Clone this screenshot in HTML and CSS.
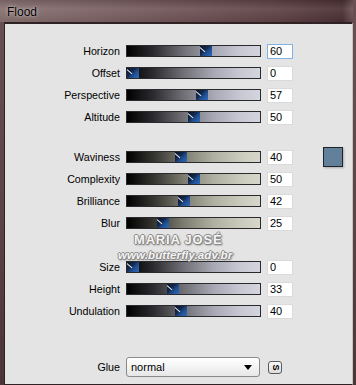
FILE: index.html
```html
<!DOCTYPE html>
<html>
<head>
<meta charset="utf-8">
<link rel="stylesheet" href="styles.css">
</head>
<body>
<div class="titlebar"><span class="title">Flood</span></div>
<div class="frame">
  <div class="panel">
    <div class="group g1">
      <div class="row"><span class="label">Horizon</span><div class="track t-lav"><div class="thumb" style="--p:0.60"></div></div><div class="val focus">60</div></div>
      <div class="row"><span class="label">Offset</span><div class="track t-lav"><div class="thumb" style="--p:0"></div></div><div class="val">0</div></div>
      <div class="row"><span class="label">Perspective</span><div class="track t-lav"><div class="thumb" style="--p:0.57"></div></div><div class="val">57</div></div>
      <div class="row"><span class="label">Altitude</span><div class="track t-lav"><div class="thumb" style="--p:0.50"></div></div><div class="val">50</div></div>
    </div>
    <div class="group g2">
      <div class="row"><span class="label">Waviness</span><div class="track t-beige"><div class="thumb" style="--p:0.40"></div></div><div class="val">40</div><div class="swatch"></div></div>
      <div class="row"><span class="label">Complexity</span><div class="track t-beige"><div class="thumb" style="--p:0.50"></div></div><div class="val">50</div></div>
      <div class="row"><span class="label">Brilliance</span><div class="track t-beige"><div class="thumb" style="--p:0.42"></div></div><div class="val">42</div></div>
      <div class="row"><span class="label">Blur</span><div class="track t-beige"><div class="thumb" style="--p:0.25"></div></div><div class="val">25</div></div>
    </div>
    <div class="group g3">
      <div class="row"><span class="label">Size</span><div class="track t-lav"><div class="thumb" style="--p:0"></div></div><div class="val">0</div></div>
      <div class="row"><span class="label">Height</span><div class="track t-lav"><div class="thumb" style="--p:0.33"></div></div><div class="val">33</div></div>
      <div class="row"><span class="label">Undulation</span><div class="track t-lav"><div class="thumb" style="--p:0.40"></div></div><div class="val">40</div></div>
    </div>
    <div class="row glue">
      <span class="label">Glue</span>
      <div class="select"><span>normal</span><span class="arrow"></span></div>
      <div class="sbtn"><span>S</span></div>
    </div>
    <div class="wm wm1">MARIA JOSÉ</div>
    <div class="wm wm2">www.butterfly.adv.br</div>
  </div>
</div>
</body>
</html>
```
FILE: styles.css
```css
html, body {
  margin: 0;
  padding: 0;
}
body {
  width: 356px;
  height: 385px;
  overflow: hidden;
  background: linear-gradient(180deg, #6a5052 0%, #5a4245 60%, #4a3537 100%);
  font-family: "Liberation Sans", Arial, sans-serif;
}
.titlebar {
  height: 22px;
  width: 353px;
  padding-left: 7px;
  box-sizing: border-box;
  background:
    linear-gradient(180deg, rgba(0,0,0,0.12) 0%, rgba(255,255,255,0.08) 40%, rgba(0,0,0,0.05) 100%),
    linear-gradient(90deg, #86706f 0%, #7c6264 25%, #6c5054 55%, #5c4044 80%, #4a2f33 97%, #6a5254 100%);
  display: flex;
  align-items: center;
}
.title {
  font-size: 12px;
  color: #000;
  text-shadow: 0 0 4px rgba(255,255,255,0.55), 0 0 2px rgba(255,255,255,0.4);
  margin-top: 1px;
}
.frame {
  height: 363px;
  padding-left: 4px;
  display: flex;
}
.panel {
  position: relative;
  width: 349px;
  box-sizing: border-box;
  border-top: 2px solid #2e2224;
  border-left: 1px solid #2e2224;
  border-bottom: 1px solid #2e2224;
  border-right: 1px solid #c4c4c4;
  background: #e4e4e4;
  padding-top: 16px;
}
.group { display: flex; flex-direction: column; }
.g2 { margin-top: 18px; }
.g3 { margin-top: 22px; }
.row {
  display: flex;
  align-items: center;
  height: 22px;
}
.label {
  width: 115px;
  text-align: right;
  font-size: 10.7px;
  color: #000;
  margin-right: 6px;
}
.track {
  position: relative;
  width: 135px;
  height: 12px;
  box-sizing: border-box;
  border: 1px solid #2a2a2e;
  margin-right: 6px;
}
.t-lav {
  background: linear-gradient(90deg, #000 0%, #2c2c30 20%, #6e6e74 42%, #a8a8b4 65%, #c8c8d4 85%, #d4d4de 100%);
}
.t-beige {
  background: linear-gradient(90deg, #000 0%, #343430 20%, #7a7a6e 42%, #b0b0a2 65%, #cacabc 85%, #d6d6cb 100%);
}
.thumb {
  position: absolute;
  top: 0;
  left: calc((100% - 12px) * var(--p, 0));
  width: 12px;
  height: 10px;
  background: linear-gradient(135deg, #0a1426 0%, #13294e 40%, #1f4c8c 60%, #2f6cc0 100%);
  overflow: hidden;
}
.thumb::after {
  content: "";
  position: absolute;
  left: 0px;
  top: 1px;
  width: 7px;
  height: 1px;
  background: #e8eef8;
  transform: rotate(40deg);
  transform-origin: 0 0;
}
.val {
  width: 26px;
  height: 15px;
  box-sizing: border-box;
  background: #fff;
  border: 1px solid #dadada;
  font-size: 11px;
  line-height: 13px;
  padding-left: 2px;
  color: #000;
}
.val.focus { border-color: #7fb3e6; }
.swatch {
  width: 20px;
  height: 20px;
  box-sizing: border-box;
  margin-left: 30px;
  background: #62809a;
  border: 1px solid #1e2428;
  box-shadow: 1px 1px 2px rgba(0,0,0,0.25);
}
.glue { margin-top: 34px; }
.select {
  width: 134px;
  height: 20px;
  box-sizing: border-box;
  border: 1px solid #8a8a8a;
  border-radius: 3px;
  background: linear-gradient(180deg, #ffffff 0%, #f4f4f4 50%, #e6e6e6 100%);
  display: flex;
  align-items: center;
  justify-content: space-between;
  padding: 0 7px 0 4px;
  font-size: 11px;
  margin-right: 8px;
}
.arrow {
  width: 0;
  height: 0;
  border-left: 4px solid transparent;
  border-right: 4px solid transparent;
  border-top: 5px solid #000;
}
.sbtn {
  width: 14px;
  height: 13px;
  box-sizing: border-box;
  border: 1px solid #5a5a5a;
  border-radius: 3px;
  background: linear-gradient(180deg, #fafafa, #dcdcdc);
  display: flex;
  align-items: center;
  justify-content: center;
  font-size: 9px;
  font-weight: bold;
}
.sbtn span { transform: rotate(90deg); display: block; line-height: 9px; }
.wm {
  position: absolute;
  color: #f4f4f4;
  font-weight: bold;
  white-space: nowrap;
  text-shadow: -1px 0 #8a8a8a, 1px 0 #8a8a8a, 0 -1px #8a8a8a, 0 1px #8a8a8a, 1px 1px 2px #555;
}
.wm1 {
  left: 129px;
  top: 208px;
  font-size: 13px;
  letter-spacing: 0.8px;
  transform: scaleY(0.95);
}
.wm2 {
  left: 113px;
  top: 225px;
  font-size: 11.5px;
  font-style: italic;
  letter-spacing: 0.1px;
}
```
